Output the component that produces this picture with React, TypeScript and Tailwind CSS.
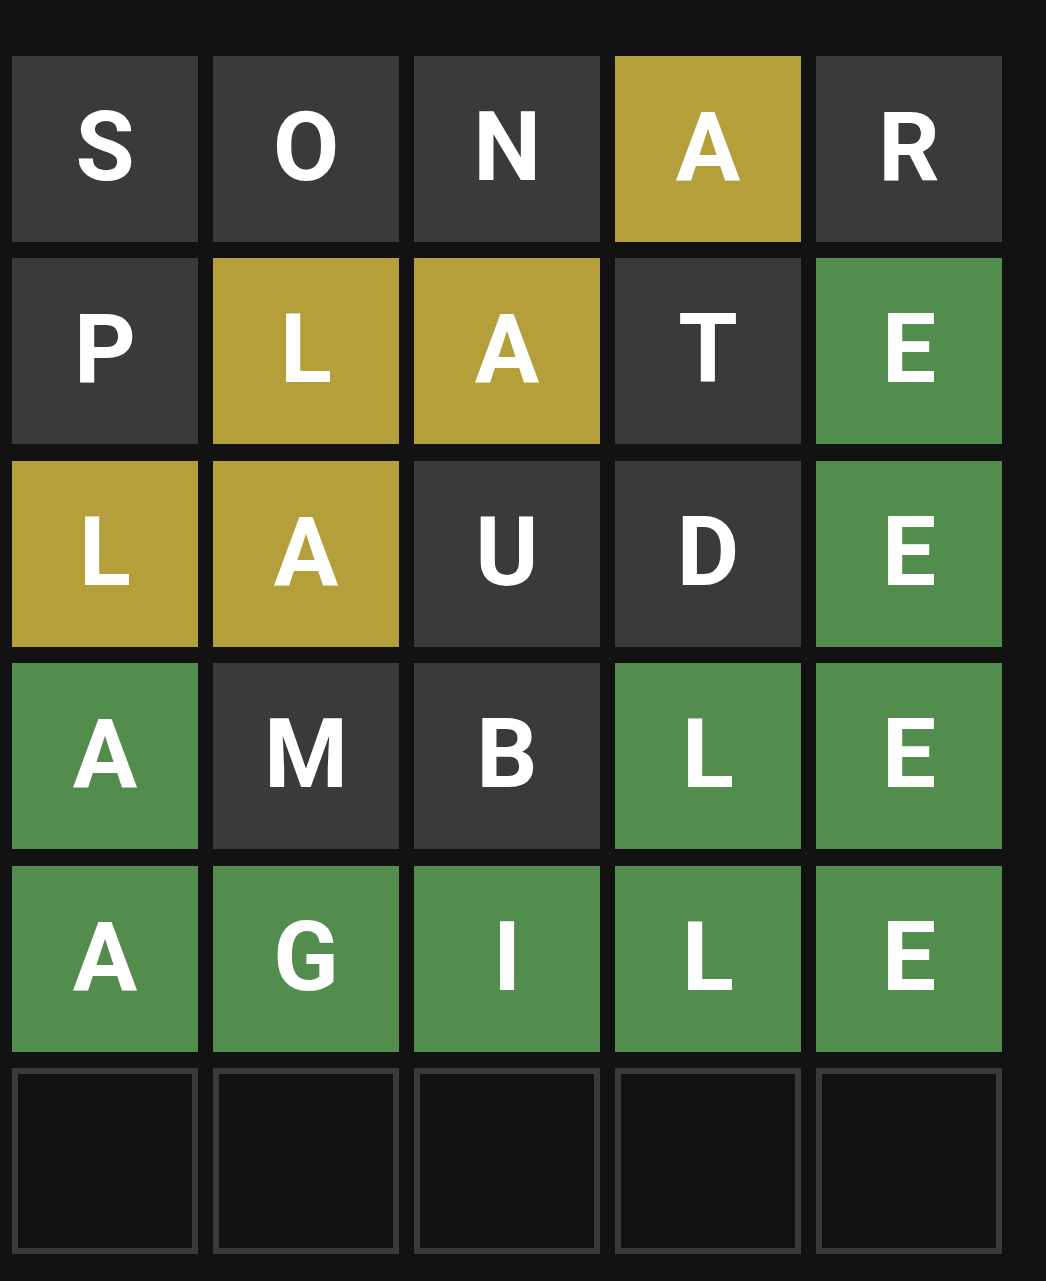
const rows: { letter: string; state: 'absent' | 'present' | 'correct' | 'empty' }[][] = [
  [
    { letter: 'S', state: 'absent' },
    { letter: 'O', state: 'absent' },
    { letter: 'N', state: 'absent' },
    { letter: 'A', state: 'present' },
    { letter: 'R', state: 'absent' },
  ],
  [
    { letter: 'P', state: 'absent' },
    { letter: 'L', state: 'present' },
    { letter: 'A', state: 'present' },
    { letter: 'T', state: 'absent' },
    { letter: 'E', state: 'correct' },
  ],
  [
    { letter: 'L', state: 'present' },
    { letter: 'A', state: 'present' },
    { letter: 'U', state: 'absent' },
    { letter: 'D', state: 'absent' },
    { letter: 'E', state: 'correct' },
  ],
  [
    { letter: 'A', state: 'correct' },
    { letter: 'M', state: 'absent' },
    { letter: 'B', state: 'absent' },
    { letter: 'L', state: 'correct' },
    { letter: 'E', state: 'correct' },
  ],
  [
    { letter: 'A', state: 'correct' },
    { letter: 'G', state: 'correct' },
    { letter: 'I', state: 'correct' },
    { letter: 'L', state: 'correct' },
    { letter: 'E', state: 'correct' },
  ],
  [
    { letter: '', state: 'empty' },
    { letter: '', state: 'empty' },
    { letter: '', state: 'empty' },
    { letter: '', state: 'empty' },
    { letter: '', state: 'empty' },
  ],
];

const tileClass = {
  absent: 'bg-[#3a3a3c]',
  present: 'bg-[#b59f3b]',
  correct: 'bg-[#538d4e]',
  empty: 'border-[6px] border-[#3a3a3c] bg-[#121212]',
};

export default function App() {
  return (
    <div className="min-h-screen bg-[#121212] pt-[56px] pl-[12px]">
      <div className="flex flex-col gap-[16.4px] w-[1002px]">
        {rows.map((row, r) => (
          <div key={r} className="flex gap-[15px]">
            {row.map((tile, c) => (
              <div
                key={c}
                className={`w-[186px] h-[186px] flex items-center justify-center pb-[4px] text-white font-bold leading-none text-[96px] font-['Roboto',Arial,sans-serif] ${tileClass[tile.state]}`}
              >
                {tile.letter}
              </div>
            ))}
          </div>
        ))}
      </div>
    </div>
  );
}
